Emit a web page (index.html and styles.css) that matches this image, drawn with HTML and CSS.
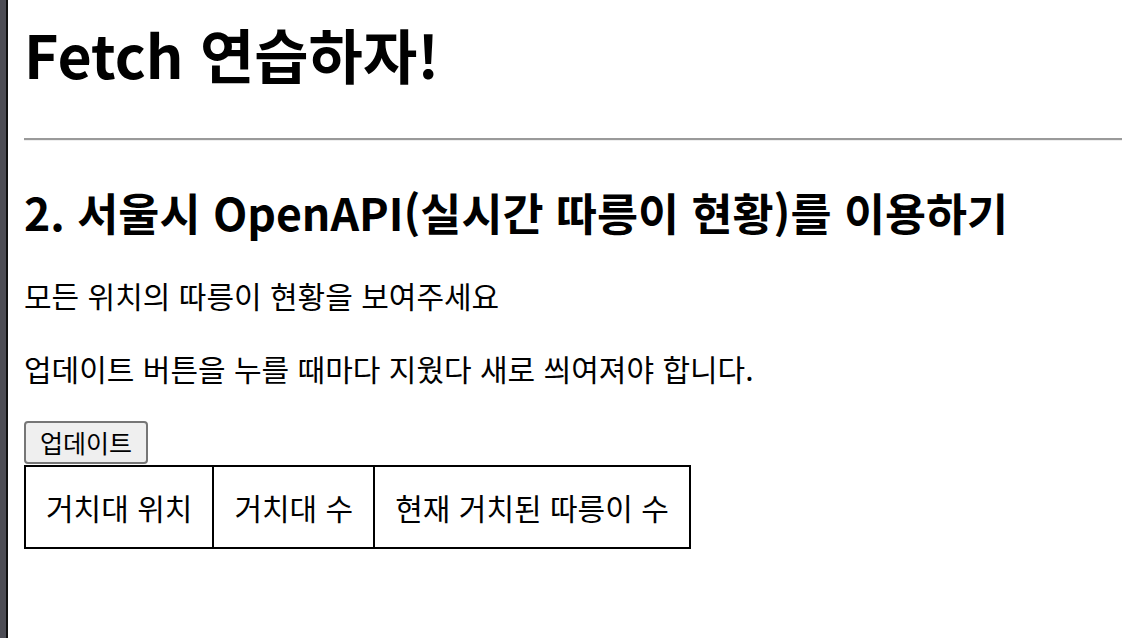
FILE: index.html
```html
<!DOCTYPE html>
<html lang="ko">
<head>
<meta charset="utf-8">
<title>Fetch 연습하자!</title>
<link rel="stylesheet" href="styles.css">
</head>
<body>
<div class="frame">
  <div class="edge"></div>
  <main class="page">
    <h1 class="title">Fetch 연습하자!</h1>
    <hr class="rule">
    <h2 class="subtitle">2. 서울시 OpenAPI(실시간 따릉이 현황)를 이용하기</h2>
    <p class="desc">모든 위치의 따릉이 현황을 보여주세요</p>
    <p class="desc">업데이트 버튼을 누를 때마다 지웠다 새로 씌여져야 합니다.</p>
    <button class="update" type="button">업데이트</button>
    <table class="bikes">
      <thead>
        <tr>
          <th>거치대 위치</th>
          <th>거치대 수</th>
          <th>현재 거치된 따릉이 수</th>
        </tr>
      </thead>
      <tbody></tbody>
    </table>
  </main>
</div>
</body>
</html>
```

FILE: styles.css
```css
html, body {
  margin: 0;
  padding: 0;
  height: 100%;
  background: #ffffff;
}
body {
  font-family: "Noto Sans CJK KR", "Noto Sans", sans-serif;
  color: #000;
  overflow: hidden;
}
.frame {
  display: flex;
  height: 638px;
}
.edge {
  width: 6px;
  flex: 0 0 6px;
  background: #4d4d55;
  border-right: 2px solid #111;
}
.page {
  flex: 1;
  padding: 0 0 0 16px;
  min-width: 0;
}
.title {
  font-size: 59px;
  font-weight: 700;
  line-height: 80px;
  margin: 14px 0 0 0;
}
.rule {
  margin: 44px 0 0 0;
  border: 0;
  border-top: 2px solid #9a9a9a;
  border-bottom: 1px solid #eeeeee;
  height: 0;
}
.subtitle {
  font-size: 44.6px;
  font-weight: 700;
  line-height: 60px;
  margin: 41px 0 0 0;
}
.desc {
  font-size: 30px;
  line-height: 40px;
  margin: 33px 0 0 0;
}
.desc + .desc {
  margin-top: 33px;
}
.update {
  display: block;
  margin: 33px 0 0 0;
  font-family: "Noto Sans CJK KR", sans-serif;
  font-size: 25px;
  line-height: 33px;
  padding: 3px 14px 3px 14px;
  background: #efefef;
  border: 2px solid #767676;
  border-radius: 4px;
  color: #000;
}
.bikes {
  border-collapse: collapse;
  border: 2px solid #000;
  margin-top: 1px;
}
.bikes th {
  border: 2px solid #000;
  font-size: 30px;
  font-weight: 400;
  line-height: 40px;
  padding: 20px 20px 20px 20px;
}
```
